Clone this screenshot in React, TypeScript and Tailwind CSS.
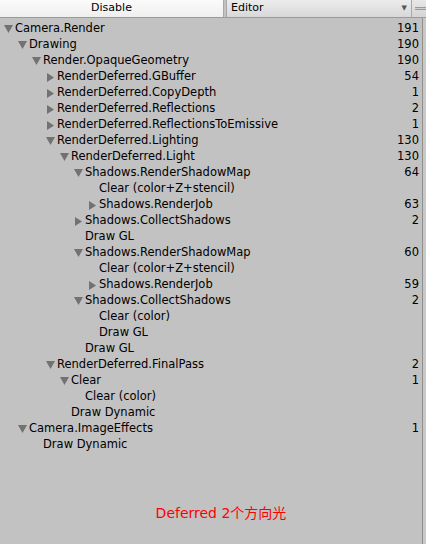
type Row = { name: string; level: number; count?: number; arrow?: "down" | "right" };

const rows: Row[] = [
  { name: "Camera.Render", level: 0, count: 191, arrow: "down" },
  { name: "Drawing", level: 1, count: 190, arrow: "down" },
  { name: "Render.OpaqueGeometry", level: 2, count: 190, arrow: "down" },
  { name: "RenderDeferred.GBuffer", level: 3, count: 54, arrow: "right" },
  { name: "RenderDeferred.CopyDepth", level: 3, count: 1, arrow: "right" },
  { name: "RenderDeferred.Reflections", level: 3, count: 2, arrow: "right" },
  { name: "RenderDeferred.ReflectionsToEmissive", level: 3, count: 1, arrow: "right" },
  { name: "RenderDeferred.Lighting", level: 3, count: 130, arrow: "down" },
  { name: "RenderDeferred.Light", level: 4, count: 130, arrow: "down" },
  { name: "Shadows.RenderShadowMap", level: 5, count: 64, arrow: "down" },
  { name: "Clear (color+Z+stencil)", level: 6 },
  { name: "Shadows.RenderJob", level: 6, count: 63, arrow: "right" },
  { name: "Shadows.CollectShadows", level: 5, count: 2, arrow: "right" },
  { name: "Draw GL", level: 5 },
  { name: "Shadows.RenderShadowMap", level: 5, count: 60, arrow: "down" },
  { name: "Clear (color+Z+stencil)", level: 6 },
  { name: "Shadows.RenderJob", level: 6, count: 59, arrow: "right" },
  { name: "Shadows.CollectShadows", level: 5, count: 2, arrow: "down" },
  { name: "Clear (color)", level: 6 },
  { name: "Draw GL", level: 6 },
  { name: "Draw GL", level: 5 },
  { name: "RenderDeferred.FinalPass", level: 3, count: 2, arrow: "down" },
  { name: "Clear", level: 4, count: 1, arrow: "down" },
  { name: "Clear (color)", level: 5 },
  { name: "Draw Dynamic", level: 4 },
  { name: "Camera.ImageEffects", level: 1, count: 1, arrow: "down" },
  { name: "Draw Dynamic", level: 2 },
];

const Arrow = ({ dir }: { dir: "down" | "right" }) =>
  dir === "down" ? (
    <svg width="9" height="8" viewBox="0 0 9 8" className="shrink-0">
      <polygon points="0,0 9,0 4.5,8" fill="#727272" />
    </svg>
  ) : (
    <svg width="9" height="9" viewBox="0 0 9 9" className="shrink-0">
      <polygon points="1,0 8,4.5 1,9" fill="#727272" />
    </svg>
  );

export default function App() {
  return (
    <div
      className="flex h-[544px] w-[426px] flex-col overflow-hidden bg-[#c2c2c2] text-[11.5px] text-black"
      style={{ fontFamily: '"DejaVu Sans", Verdana, sans-serif' }}
    >
      {/* toolbar */}
      <div className="flex h-[18px] shrink-0 border-b border-[#9a9a9a]">
        <div className="flex w-[224px] items-center justify-center border-r border-[#a8a8a8] bg-gradient-to-b from-[#fbfbfb] to-[#efefef] text-[11px]">
          Disable
        </div>
        <div className="ml-[2px] flex w-[186px] items-center justify-between border-x border-[#a8a8a8] bg-gradient-to-b from-[#ececec] to-[#d8d8d8] pl-[4px] pr-[4px] text-[11px]">
          <span>Editor</span>
          <span className="text-[7px] text-[#555]">▼</span>
        </div>
        <div className="flex flex-1 items-center bg-gradient-to-b from-[#e8e8e8] to-[#d4d4d4] pl-[3px]">
          <div className="h-[3px] w-full border-y border-[#9a9a9a] bg-[#cfcfcf]" />
        </div>
      </div>

      <div className="flex flex-1">
        <div className="flex flex-1 flex-col pt-[3px]">
          {rows.map((r, i) => (
            <div key={i} className="flex h-[16px] items-center">
              <div
                className="flex w-[11px] shrink-0 items-center justify-start"
                style={{ marginLeft: 4 + r.level * 14 }}
              >
                {r.arrow && <Arrow dir={r.arrow} />}
              </div>
              <span className="whitespace-nowrap leading-none">{r.name}</span>
              <span className="ml-auto pr-[3px] leading-none">{r.count ?? ""}</span>
            </div>
          ))}
          <div className="flex flex-1 items-center justify-center pl-[20px] pt-[30px]">
            <span
              className="text-[14px] text-[#ff0000]"
              style={{ fontFamily: '"DejaVu Sans", "Noto Sans CJK SC", sans-serif' }}
            >
              Deferred 2个方向光
            </span>
          </div>
        </div>
        <div className="w-[4px] shrink-0 border-l border-[#8f8f8f] bg-[#c8c8c8]" />
      </div>
    </div>
  );
}
